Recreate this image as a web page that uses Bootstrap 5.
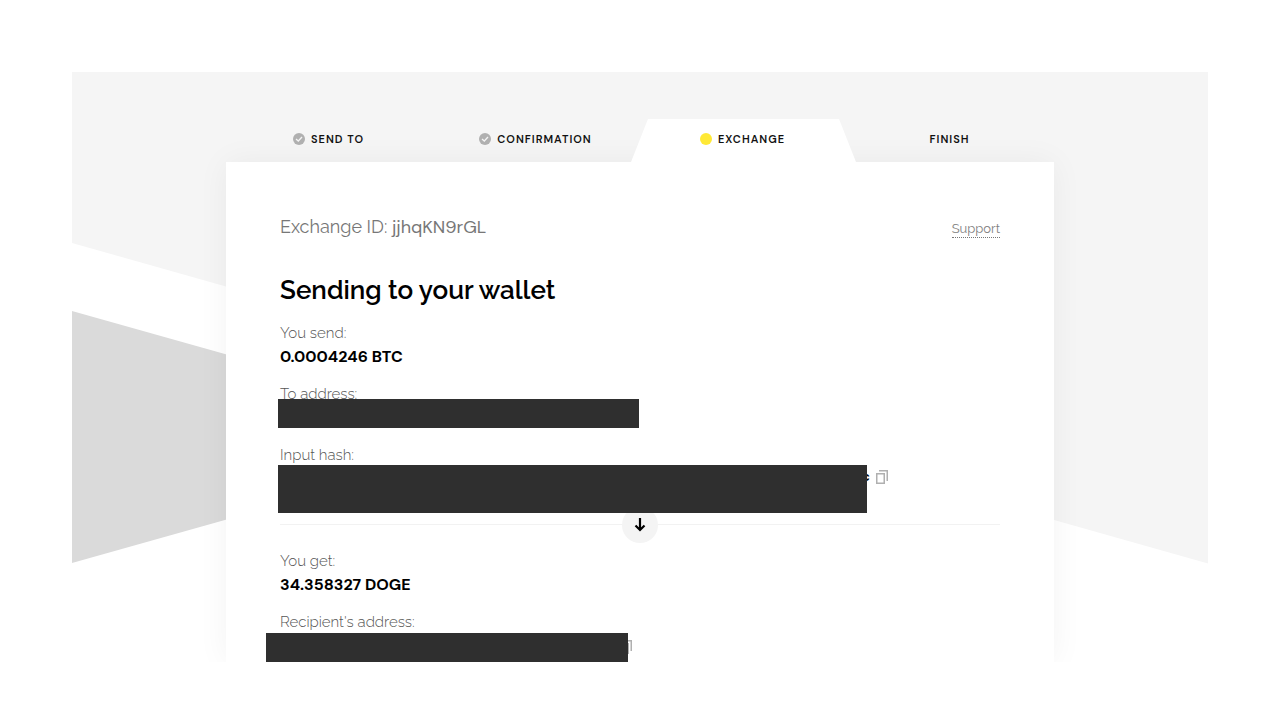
<!DOCTYPE html>
<html lang="en">
<head>
<meta charset="utf-8">
<meta name="viewport" content="width=device-width, initial-scale=1">
<title>Exchange jjhqKN9rGL</title>
<link href="https://cdn.jsdelivr.net/npm/bootstrap@5.3.0/dist/css/bootstrap.min.css" rel="stylesheet">
<style>
  body { font-family: Raleway, Lato, "Open Sans", sans-serif; color: #000; background: #fff; }
  .page-frame { padding: 72px 72px 58px; }
  .panel-wrap { max-width: 828px; padding-top: 47px; }
  .steps { height: 43px; font: 600 11px/16px "DM Sans", Inter, sans-serif; letter-spacing: 1px; color: #111; }
  .step { gap: 6px; padding: 0 2px 3px 0; }
  .step-active::before { content: ""; position: absolute; inset: 0 -9px; background: #fff; clip-path: polygon(17px 0, calc(100% - 17px) 0, 100% 100%, 0 100%); }
  .dot { width: 12px; height: 12px; background: #ffe936; }
  .panel { padding: 50px 54px 0; box-shadow: 0 0 30px rgba(0, 0, 0, .05); }
  .exchange-id { font-size: 18px; line-height: 30px; font-weight: 400; color: #777; }
  .exchange-id span { font-family: "DM Sans", Inter, sans-serif; }
  .support { font-size: 13px; line-height: 16px; color: #808080; border-bottom: 1px dotted #777; }
  .title { font-size: 26px; line-height: 36px; font-weight: 600; margin: 30px 0 13px; }
  .field { margin-bottom: 13px; }
  .field dt { font-size: 15px; line-height: 24px; font-weight: 300; color: #555; }
  .field dd { font: 700 16px/24px "DM Sans", Inter, sans-serif; margin: 0; min-height: 24px; }
  .redacted { background: #2f2f2f; max-width: 100%; left: -2px; }
  .bar-address { top: -7px; width: 361px; height: 29px; }
  .bar-hash { top: -2px; width: 589px; height: 48px; }
  .bar-recipient { top: -1px; left: -14px; width: 362px; height: 29px; }
  .hash { padding-left: 582px; padding-bottom: 4px; gap: 6px; height: 24px; }
  .hash-end { font-size: 13px; line-height: 20px; }
  .recipient { padding-left: 340px; height: 28px; }
  .copy { line-height: 0; }
  .divider { border-top: 1px solid #f2f2f2; margin: 33px 0 24px; }
  .arrow { width: 36px; height: 36px; background: #f4f4f4; }
</style>
</head>
<body>
<div class="page-frame">
  <main class="position-relative overflow-hidden">
    <svg class="position-absolute top-0 start-0 w-100 h-100" viewBox="0 0 1136 590" preserveAspectRatio="none" aria-hidden="true">
      <path fill="#f5f5f5" d="M0 0H1136V491.500L0 171Z"/>
      <path fill="#dadada" d="M0 239L447 365L0 491Z"/>
    </svg>
    <div class="panel-wrap position-relative mx-auto">
      <ol class="steps row g-0 list-unstyled mb-0 position-relative z-1">
        <li class="step col d-flex align-items-center justify-content-center">
          <svg width="12" height="12" viewBox="0 0 12 12" aria-hidden="true"><circle cx="6" cy="6" r="6" fill="#b0b0b0"/><path d="M3 6L5.300 8L9 4" fill="none" stroke="#f4f4f4" stroke-width="1.300"/></svg>
          <span>SEND TO</span>
        </li>
        <li class="step col d-flex align-items-center justify-content-center">
          <svg width="12" height="12" viewBox="0 0 12 12" aria-hidden="true"><circle cx="6" cy="6" r="6" fill="#b0b0b0"/><path d="M3 6L5.300 8L9 4" fill="none" stroke="#f4f4f4" stroke-width="1.300"/></svg>
          <span>CONFIRMATION</span>
        </li>
        <li class="step step-active col d-flex align-items-center justify-content-center position-relative" aria-current="step">
          <span class="dot rounded-circle position-relative"></span>
          <span class="position-relative">EXCHANGE</span>
        </li>
        <li class="step col d-flex align-items-center justify-content-center"><span>FINISH</span></li>
      </ol>
      <section class="panel bg-white">
        <div class="d-flex justify-content-between align-items-end">
          <div class="exchange-id">Exchange ID: <span>jjhqKN9rGL</span></div>
          <a class="support text-decoration-none mb-1" href="#support">Support</a>
        </div>
        <h1 class="title">Sending to your wallet</h1>
        <dl class="mb-0">
          <div class="field"><dt>You send:</dt><dd>0.0004246 BTC</dd></div>
          <div class="field"><dt>To address:</dt><dd class="position-relative"><span class="redacted bar-address position-absolute"></span></dd></div>
          <div class="field"><dt>Input hash:</dt>
            <dd class="hash position-relative d-flex align-items-center"><span class="hash-end">c</span>
              <button class="copy btn p-0 border-0" type="button" aria-label="Copy hash"><svg width="12" height="14" viewBox="0 0 12 14" fill="none" stroke="#b0b0b0" stroke-width="1.500"><path d="M.75 3.750h7.500v9.500h-7.500zM3 .75h8.250V11"/></svg></button>
              <span class="redacted bar-hash position-absolute z-1"></span>
            </dd>
          </div>
        </dl>
        <div class="divider position-relative">
          <div class="arrow position-absolute top-0 start-50 translate-middle rounded-circle d-flex align-items-center justify-content-center">
            <svg width="12" height="14" viewBox="0 0 12 14" fill="none" stroke="#000" stroke-width="2.200" aria-hidden="true"><path d="M6 0V12M1.500 7.500L6 12L10.500 7.500"/></svg>
          </div>
        </div>
        <dl class="mb-0">
          <div class="field"><dt>You get:</dt><dd>34.358327 DOGE</dd></div>
          <div class="field mb-0"><dt>Recipient's address:</dt>
            <dd class="recipient position-relative">
              <button class="copy btn p-0 border-0" type="button" aria-label="Copy address"><svg width="12" height="14" viewBox="0 0 12 14" fill="none" stroke="#b0b0b0" stroke-width="1.500"><path d="M.75 3.750h7.500v9.500h-7.500zM3 .75h8.250V11"/></svg></button>
              <span class="redacted bar-recipient position-absolute z-1"></span>
            </dd>
          </div>
        </dl>
      </section>
    </div>
  </main>
</div>
<script src="https://cdn.jsdelivr.net/npm/bootstrap@5.3.0/dist/js/bootstrap.bundle.min.js"></script>
</body>
</html>
